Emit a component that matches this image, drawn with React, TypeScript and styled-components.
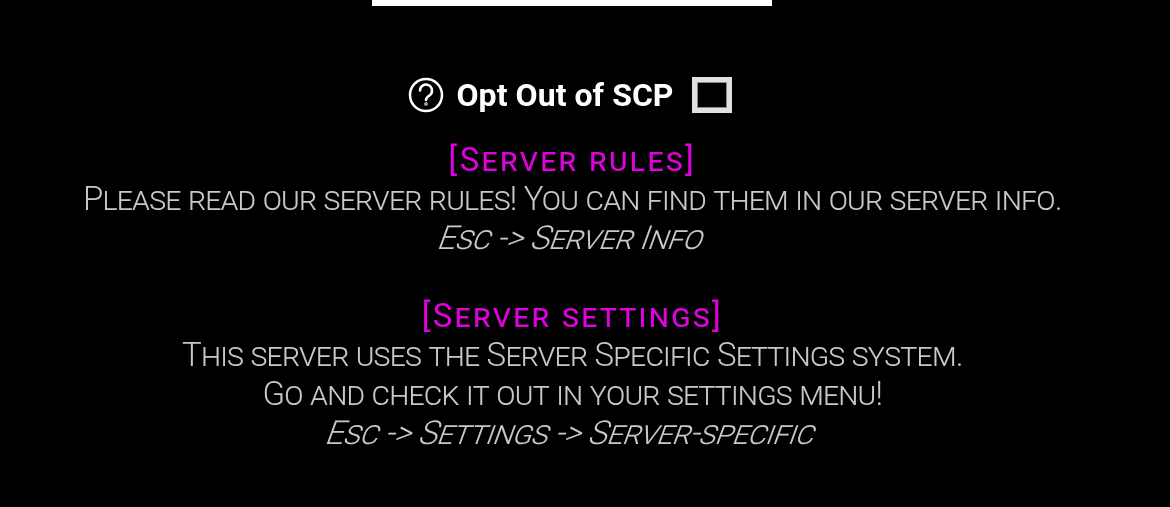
import React from 'react';
import styled, { createGlobalStyle } from 'styled-components';

const Global = createGlobalStyle`
html, body {
  margin: 0;
  padding: 0;
  background: #000;
}
`;

const Page = styled.div`
width: 1144px;
height: 507px;
overflow: hidden;
background: #000;
display: flex;
flex-direction: column;
align-items: center;
`;

const TopBar = styled.div`
width: 400px;
height: 6px;
background: #fff;
`;

const OptRow = styled.div`
display: flex;
align-items: center;
margin-top: 70px;
margin-right: 4px;
height: 38px;
will-change: transform;
`;

const HelpIcon = styled.svg`
width: 36px;
height: 36px;
display: block;
`;

const OptLabel = styled.span`
font-family: Roboto, sans-serif;
font-weight: 700;
font-size: 32px;
line-height: 38px;
letter-spacing: 0.05px;
color: #fff;
margin-left: 12.5px;
`;

const CheckBox = styled.div`
box-sizing: border-box;
width: 40px;
height: 36px;
margin-left: 18.5px;
border: 5px solid #e0e0e0;
box-shadow: inset 0 0 0 1px #8c8c8c;
background: #000;
`;

const Notes = styled.div`
margin-top: 26px;
display: flex;
flex-direction: column;
align-items: center;
font-family: Roboto, sans-serif;
font-variant: small-caps;
text-align: center;
white-space: nowrap;
will-change: transform;
`;

const Heading = styled.div<{ $gap?: boolean }>`
color: #e000e0;
font-weight: 400;
font-size: 33px;
line-height: 39px;
letter-spacing: 2.3px;
margin-top: ${(p) => (p.$gap ? '39px' : '0')};
`;

const Line = styled.div`
color: #c8c8c8;
font-weight: 300;
font-size: 33px;
line-height: 39px;
letter-spacing: -0.78px;
`;

// the game slants the upright face, so skew it instead of using Roboto Italic
const SlantedLine = styled(Line)`
letter-spacing: -0.55px;
transform: skewX(-20deg);
`;

export default function App() {
  return (
    <>
      <Global />
      <Page>
        <TopBar />
        <OptRow>
          <HelpIcon viewBox="0 0 36 36" fill="none" stroke="#fff" strokeWidth="2.5" strokeLinecap="round">
            <circle cx="18" cy="18" r="16" />
            <path d="M12 13.5a6 6 0 1 1 9.4 5c-2.1 1.4-3.4 2.4-3.4 4.5" />
            <circle cx="18" cy="27" r="0.5" />
          </HelpIcon>
          <OptLabel>Opt Out of SCP</OptLabel>
          <CheckBox />
        </OptRow>
        <Notes>
          <Heading>[Server rules]</Heading>
          <Line>Please read our server rules! You can find them in our server info.</Line>
          <SlantedLine>Esc -&gt; Server Info</SlantedLine>
          <Heading $gap>[Server settings]</Heading>
          <Line>This server uses the Server Specific Settings system.</Line>
          <Line>Go and check it out in your settings menu!</Line>
          <SlantedLine>Esc -&gt; Settings -&gt; Server-specific</SlantedLine>
        </Notes>
      </Page>
    </>
  );
}
